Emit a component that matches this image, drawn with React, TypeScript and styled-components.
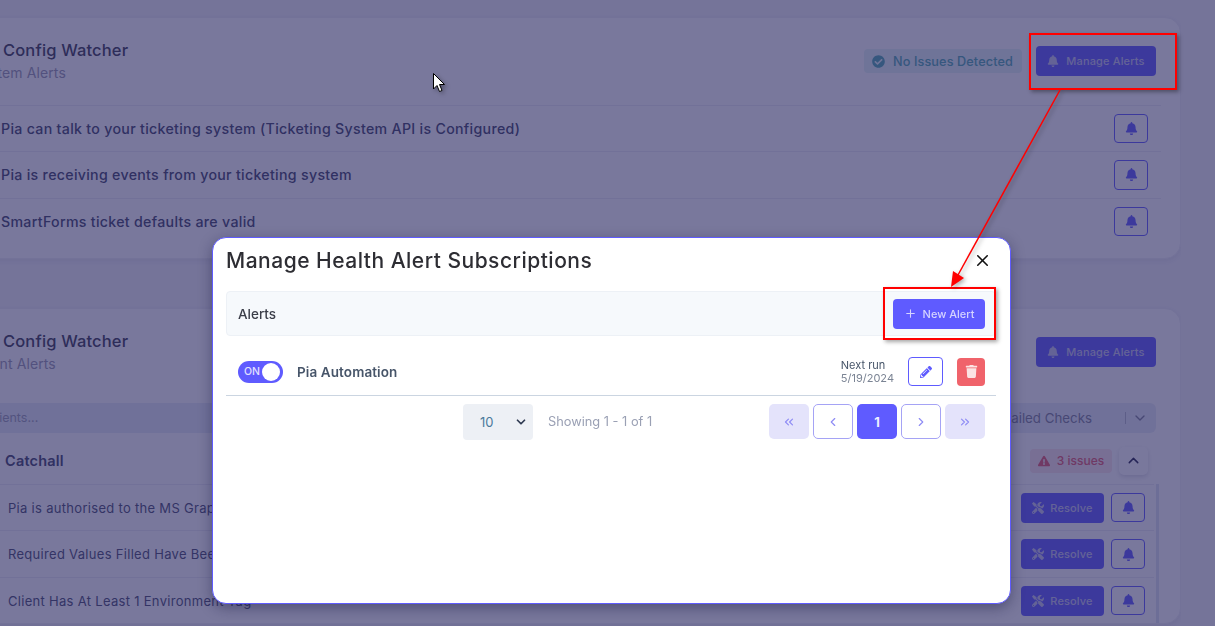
import React, { FC } from 'react';
import styled, { createGlobalStyle } from 'styled-components';
import { FaBell, FaCheckCircle, FaExclamationTriangle, FaPencilAlt, FaTools, FaTrash } from 'react-icons/fa';
import { ChevronDown, ChevronLeft, ChevronRight, ChevronUp, ChevronsLeft, ChevronsRight, Plus, X } from 'lucide-react';

const PRIMARY = '#5f5bff';

const GlobalStyle = createGlobalStyle`
  html, body {
    margin: 0;
    height: 100%;
    overflow: hidden;
    background: #f4f4f8;
    font-family: Inter, "Open Sans", sans-serif;
  }
  * { box-sizing: border-box; }
`;

const Page = styled.div`
  width: 1241px;
  height: 626px;
  margin-left: -60px;
  padding-top: 17px;
  display: flex;
  flex-direction: column;
  gap: 49px;
  overflow: hidden;
`;

const Card = styled.section`
  background: #fff;
  border: 1px solid #eeeef4;
  border-radius: 16px;
  box-shadow: 0 2px 6px rgba(40, 40, 90, 0.08);
  flex-shrink: 0;
  padding-right: 24px;
`;

const CardHeader = styled.header`
  height: 87px;
  padding: 0 0 1px 62px;
  display: flex;
  align-items: center;
  justify-content: space-between;
`;

const Titles = styled.div`
  display: flex;
  flex-direction: column;
  gap: 4px;
`;

const CardTitle = styled.h3`
  margin: 0;
  font-size: 16.5px;
  font-weight: 500;
  letter-spacing: 0.15px;
  line-height: 20px;
  color: #3a3a50;
`;

const CardSubtitle = styled.div<{ $shift: number }>`
  margin-left: ${(p) => p.$shift}px;
  font-size: 14px;
  letter-spacing: 0.1px;
  line-height: 18px;
  color: #9a9ab0;
`;

const HeaderActions = styled.div`
  display: flex;
  align-items: center;
  gap: 14px;
`;

const StatusChip = styled.div`
  width: 158px;
  height: 24px;
  padding-left: 8px;
  display: flex;
  align-items: center;
  gap: 8px;
  border-radius: 4px;
  background: #e4f4f4;
  color: #4fa8b0;
  font-size: 12.7px;
  font-weight: 500;
  letter-spacing: 0.1px;
  svg { flex-shrink: 0; }
`;

const ManageButton = styled.button`
  width: 120px;
  height: 30px;
  border: 0;
  border-radius: 4px;
  background: ${PRIMARY};
  color: #c9c8f0;
  font: 500 11px Inter, sans-serif;
  letter-spacing: 0.15px;
  display: flex;
  align-items: center;
  justify-content: center;
  gap: 7px;
`;

const CheckRow = styled.div`
  height: 46.33px;
  margin-right: -5px;
  padding-right: 13px;
  border-top: 1px solid #ecedf3;
  display: flex;
  align-items: center;
  justify-content: space-between;
`;

const CheckLabel = styled.span`
  padding-left: 60px;
  font-size: 14.2px;
  font-weight: 500;
  letter-spacing: 0.3px;
  color: #3f4468;
`;

const BellButton = styled.button`
  width: 34px;
  height: 29.5px;
  padding: 0;
  border: 1px solid ${PRIMARY};
  border-radius: 4px;
  background: #fff;
  color: ${PRIMARY};
  display: flex;
  align-items: center;
  justify-content: center;
`;

const TopCardBody = styled.div`
  padding-bottom: 14px;
`;

const FilterBar = styled.div`
  height: 30px;
  margin-top: 7px;
  padding: 0 8px 0 0;
  background: #e8edf6;
  border-radius: 6px;
  display: flex;
  align-items: center;
  justify-content: space-between;
  font-size: 12.5px;
  color: #9a9fb4;
`;

const FilterPlaceholder = styled.span`
  margin-left: 3px;
`;

const FilterRight = styled.div`
  display: flex;
  align-items: center;
  color: #7d8198;
  font-size: 13.3px;
`;

const FilterRule = styled.span`
  width: 1px;
  height: 12px;
  margin: 0 6px 0 33px;
  background: #b6bacb;
`;

const GroupRow = styled.div`
  height: 51px;
  padding: 5px 8px 0 64px;
  display: flex;
  align-items: center;
  justify-content: space-between;
`;

const GroupName = styled.span`
  font-size: 14.5px;
  font-weight: 600;
  letter-spacing: 0.2px;
  color: #3f4468;
`;

const GroupActions = styled.div`
  display: flex;
  align-items: center;
  gap: 7px;
`;

const IssueChip = styled.div`
  width: 82px;
  height: 24px;
  display: flex;
  align-items: center;
  justify-content: center;
  gap: 7px;
  border-radius: 4px;
  background: #fbe6ea;
  color: #e65a6c;
  font-size: 12px;
  font-weight: 500;
`;

const CollapseButton = styled.button`
  width: 29px;
  height: 28px;
  padding: 0;
  border: 0;
  border-radius: 5px;
  background: #fff;
  box-shadow: 0 2px 4px rgba(40, 40, 90, 0.16);
  color: #23234a;
  display: flex;
  align-items: center;
  justify-content: center;
`;

const IssueList = styled.div`
  margin-right: -3px;
  padding-right: 2px;
  border-right: 3px solid #dfe4f2;
`;

const IssueRow = styled.div`
  height: 46.5px;
  padding-right: 9px;
  border-top: 1px solid #ecedf3;
  display: flex;
  align-items: center;
  justify-content: space-between;
`;

const IssueLabel = styled.span`
  padding-left: 67px;
  font-size: 13px;
  letter-spacing: 0.3px;
  color: #4a4e70;
`;

const RowActions = styled.div`
  display: flex;
  align-items: center;
  gap: 7px;
`;

const ResolveButton = styled.button`
  width: 83px;
  height: 30px;
  border: 0;
  border-radius: 4px;
  background: ${PRIMARY};
  color: #c9c8f0;
  font: 500 11px Inter, sans-serif;
  letter-spacing: 0.15px;
  display: flex;
  align-items: center;
  justify-content: center;
  gap: 6px;
`;

const Backdrop = styled.div`
  position: fixed;
  inset: 0;
  background: rgba(39, 37, 95, 0.62);
`;

const Modal = styled.div`
  position: absolute;
  left: 212px;
  top: 237px;
  width: 799px;
  height: 367px;
  padding: 0 14px 0 13px;
  background: #fff;
  border: 1px solid ${PRIMARY};
  border-radius: 14px;
  box-shadow: 0 4px 14px rgba(20, 20, 60, 0.4);
`;

const ModalHead = styled.div`
  height: 53px;
  padding-bottom: 9px;
  display: flex;
  align-items: center;
  justify-content: space-between;
`;

const ModalTitle = styled.h2`
  margin: 0;
  font-size: 21px;
  font-weight: 500;
  letter-spacing: 0.5px;
  color: #2d2d33;
`;

const CloseButton = styled.button`
  margin-right: 4px;
  padding: 0;
  border: 0;
  background: none;
  color: #111;
  display: flex;
`;

const SectionBar = styled.div`
  height: 45px;
  padding: 0 10px 0 11px;
  background: #f6f9fc;
  border: 1px solid #edf1f6;
  border-radius: 4px;
  display: flex;
  align-items: center;
  justify-content: space-between;
  font-size: 13.5px;
  font-weight: 500;
  color: #3a3d48;
`;

const NewAlertButton = styled.button`
  width: 92px;
  height: 30px;
  border: 0;
  border-radius: 4px;
  background: ${PRIMARY};
  color: #d5d4ff;
  font: 500 11px Inter, sans-serif;
  display: flex;
  align-items: center;
  justify-content: center;
  gap: 6px;
`;

const AlertRow = styled.div`
  height: 60px;
  padding: 12px 11px 0 12px;
  border-bottom: 1px solid #cbd5e1;
  display: flex;
  align-items: center;
`;

const Toggle = styled.div`
  position: relative;
  width: 45px;
  height: 22px;
  padding-left: 6px;
  border-radius: 11px;
  background: ${PRIMARY};
  color: #e2e1ff;
  font-size: 10.5px;
  font-weight: 500;
  display: flex;
  align-items: center;
`;

const ToggleKnob = styled.span`
  position: absolute;
  right: 3px;
  top: 2px;
  width: 18px;
  height: 18px;
  border-radius: 50%;
  background: #fff;
`;

const AlertName = styled.span`
  margin-left: 14px;
  flex: 1;
  font-size: 13.5px;
  font-weight: 600;
  letter-spacing: 0.1px;
  color: #475569;
`;

const NextRun = styled.div`
  margin-right: 14px;
  font-size: 11px;
  line-height: 13px;
  color: #475569;
`;

const NextRunDate = styled.div`
  color: #7b8494;
`;

const EditButton = styled.button`
  width: 35px;
  height: 29px;
  padding: 0;
  border: 1px solid ${PRIMARY};
  border-radius: 4px;
  background: #fff;
  color: ${PRIMARY};
  display: flex;
  align-items: center;
  justify-content: center;
`;

const DeleteButton = styled.button`
  width: 28px;
  height: 28px;
  margin-left: 14px;
  padding: 0;
  border: 0;
  border-radius: 4px;
  background: #f0636b;
  color: #fbe3e3;
  display: flex;
  align-items: center;
  justify-content: center;
`;

const Pager = styled.div`
  height: 44px;
  padding: 8px 11px 0 237px;
  display: flex;
  align-items: flex-start;
`;

const PageSize = styled.div`
  width: 70px;
  height: 36px;
  padding: 0 5px 0 17px;
  background: #edf0f5;
  border-radius: 4px;
  display: flex;
  align-items: center;
  justify-content: space-between;
  font-size: 13px;
  color: #4b7a9c;
  svg { color: #2f3b52; }
`;

const Showing = styled.span`
  margin-left: 15px;
  flex: 1;
  line-height: 36px;
  font-size: 12.8px;
  color: #9aa0b4;
`;

const PageButtons = styled.div`
  display: flex;
  gap: 4px;
`;

const PageButton = styled.button<{ $kind: 'muted' | 'outline' | 'active' }>`
  width: 40px;
  height: 35px;
  padding: 0;
  border: ${(p) => (p.$kind === 'outline' ? `1px solid #a5a3f5` : '0')};
  border-radius: 5px;
  background: ${(p) => (p.$kind === 'muted' ? '#e4e3fb' : p.$kind === 'active' ? PRIMARY : '#fff')};
  color: ${(p) => (p.$kind === 'active' ? '#eeeeff' : '#8f8cf5')};
  font: 700 13px Inter, sans-serif;
  display: flex;
  align-items: center;
  justify-content: center;
`;

const Callout = styled.div<{ $x: number; $y: number; $w: number; $h: number }>`
  position: absolute;
  left: ${(p) => p.$x}px;
  top: ${(p) => p.$y}px;
  width: ${(p) => p.$w}px;
  height: ${(p) => p.$h}px;
  border: 2px solid #f00;
  box-shadow: 2px 2px 4px rgba(0, 0, 0, 0.35);
`;

const OverlayDrawing = styled.svg`
  position: absolute;
  left: 0;
  top: 0;
  pointer-events: none;
  filter: drop-shadow(2px 2px 2px rgba(0, 0, 0, 0.3));
`;

const topChecks = [
  'Pia can talk to your ticketing system (Ticketing System API is Configured)',
  'Pia is receiving events from your ticketing system',
  'SmartForms ticket defaults are valid',
];

const clientChecks = [
  'Pia is authorised to the MS Graph API',
  'Required Values Filled Have Been Set',
  'Client Has At Least 1 Environment Tag',
];

const App: FC = () => (
  <>
    <GlobalStyle />
    <Page>
      <Card>
        <CardHeader>
          <Titles>
            <CardTitle>Config Watcher</CardTitle>
            <CardSubtitle $shift={-30}>System Alerts</CardSubtitle>
          </Titles>
          <HeaderActions>
            <StatusChip>
              <FaCheckCircle size={13} />
              No Issues Detected
            </StatusChip>
            <ManageButton>
              <FaBell size={12} />
              Manage Alerts
            </ManageButton>
          </HeaderActions>
        </CardHeader>
        <TopCardBody>
          {topChecks.map((label) => (
            <CheckRow key={label}>
              <CheckLabel>{label}</CheckLabel>
              <BellButton>
                <FaBell size={13} />
              </BellButton>
            </CheckRow>
          ))}
        </TopCardBody>
      </Card>
      <Card>
        <CardHeader>
          <Titles>
            <CardTitle>Config Watcher</CardTitle>
            <CardSubtitle $shift={-29}>Client Alerts</CardSubtitle>
          </Titles>
          <HeaderActions>
            <ManageButton>
              <FaBell size={12} />
              Manage Alerts
            </ManageButton>
          </HeaderActions>
        </CardHeader>
        <FilterBar>
          <FilterPlaceholder>Search clients...</FilterPlaceholder>
          <FilterRight>
            Failed Checks
            <FilterRule />
            <ChevronDown size={16} />
          </FilterRight>
        </FilterBar>
        <GroupRow>
          <GroupName>Catchall</GroupName>
          <GroupActions>
            <IssueChip>
              <FaExclamationTriangle size={12} />3 issues
            </IssueChip>
            <CollapseButton>
              <ChevronUp size={17} />
            </CollapseButton>
          </GroupActions>
        </GroupRow>
        <IssueList>
          {clientChecks.map((label) => (
            <IssueRow key={label}>
              <IssueLabel>{label}</IssueLabel>
              <RowActions>
                <ResolveButton>
                  <FaTools size={12} />
                  Resolve
                </ResolveButton>
                <BellButton>
                  <FaBell size={13} />
                </BellButton>
              </RowActions>
            </IssueRow>
          ))}
        </IssueList>
      </Card>
    </Page>
    <Backdrop />
    <Modal>
      <ModalHead>
        <ModalTitle>Manage Health Alert Subscriptions</ModalTitle>
        <CloseButton>
          <X size={19} strokeWidth={2} />
        </CloseButton>
      </ModalHead>
      <SectionBar>
        Alerts
        <NewAlertButton>
          <Plus size={13} strokeWidth={2} />
          New Alert
        </NewAlertButton>
      </SectionBar>
      <AlertRow>
        <Toggle>
          ON
          <ToggleKnob />
        </Toggle>
        <AlertName>Pia Automation</AlertName>
        <NextRun>
          Next run
          <NextRunDate>5/19/2024</NextRunDate>
        </NextRun>
        <EditButton>
          <FaPencilAlt size={12} />
        </EditButton>
        <DeleteButton>
          <FaTrash size={13} />
        </DeleteButton>
      </AlertRow>
      <Pager>
        <PageSize>
          10
          <ChevronDown size={14} strokeWidth={3} />
        </PageSize>
        <Showing>Showing 1 - 1 of 1</Showing>
        <PageButtons>
          <PageButton $kind="muted">
            <ChevronsLeft size={14} />
          </PageButton>
          <PageButton $kind="outline">
            <ChevronLeft size={14} />
          </PageButton>
          <PageButton $kind="active">1</PageButton>
          <PageButton $kind="outline">
            <ChevronRight size={14} />
          </PageButton>
          <PageButton $kind="muted">
            <ChevronsRight size={14} />
          </PageButton>
        </PageButtons>
      </Pager>
    </Modal>
    <Callout $x={1029} $y={33} $w={148} $h={57} />
    <Callout $x={883} $y={287} $w={113} $h={53} />
    <OverlayDrawing width={1215} height={626}>
      <line x1={1060} y1={90} x2={958} y2={275} stroke="#f00" strokeWidth={1.5} />
      <path d="M951 287 L953 271 L964 278 Z" fill="#f00" />
      <path
        d="M433.5 73.5 V89 L437 85.5 L439.5 91.5 L442 90.5 L439.5 84.5 L444.5 84.5 Z"
        fill="#fff"
        stroke="#000"
        strokeWidth={1}
      />
    </OverlayDrawing>
  </>
);

export default App;
